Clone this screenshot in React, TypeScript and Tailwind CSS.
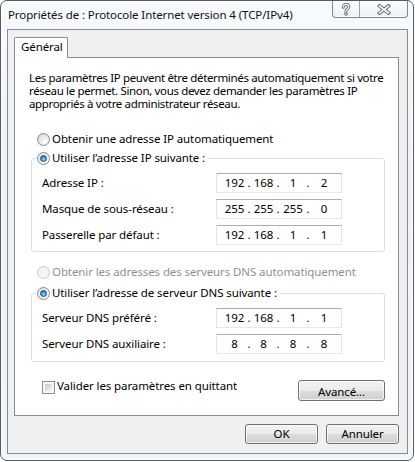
import React from "react";

function Radio({ checked = false, disabled = false }: { checked?: boolean; disabled?: boolean }) {
  return (
    <span
      className={`w-[13px] h-[13px] rounded-full border flex items-center justify-center shrink-0 ${
        disabled
          ? "border-[#c8c8c8] bg-[#f4f4f4]"
          : checked
          ? "border-[#8a8a8a] bg-[radial-gradient(circle_at_60%_65%,#ffffff_0%,#f0f0f0_55%,#d4d4d4_100%)]"
          : "border-[#8a8a8a] bg-[radial-gradient(circle_at_65%_70%,#ffffff_0%,#e9e9e9_45%,#cdcdcd_100%)]"
      }`}
    >
      {checked && (
        <span className="w-[7px] h-[7px] rounded-full border border-[#1a4f82] bg-[radial-gradient(circle_at_55%_65%,#9be2ff_0%,#3a96d8_50%,#17569a_100%)]" />
      )}
    </span>
  );
}

function Checkbox() {
  return (
    <span className="w-[13px] h-[13px] border border-[#8e8f8f] bg-[#f6f6f6] p-[2px] shrink-0 block">
      <span className="block w-full h-full bg-[linear-gradient(135deg,#c3c7cd_0%,#e2e4e7_60%,#f4f4f4_100%)]" />
    </span>
  );
}

function IpField({ parts }: { parts: string[] }) {
  const widths = ["w-[25px]", "w-[25px]", "w-[26px]", "w-[28px]"];
  return (
    <div className="w-[126px] h-[20px] border border-[#dfe3ea] border-t-[#abadb3] border-b-[#e3e9ef] bg-white flex items-center pl-[5px] shrink-0">
      {parts.map((p, i) => (
        <React.Fragment key={i}>
          <span className={`${widths[i]} text-center`}>{p}</span>
          {i < 3 && <span className="w-[4px] flex justify-center">.</span>}
        </React.Fragment>
      ))}
    </div>
  );
}

function FieldRow({ label, parts }: { label: string; parts: string[] }) {
  return (
    <div className="flex items-center h-[20px] pl-[6px]">
      <span className="w-[174px] shrink-0 whitespace-nowrap">{label}</span>
      <IpField parts={parts} />
    </div>
  );
}

function WinButton({ children, className = "" }: { children: React.ReactNode; className?: string }) {
  return (
    <div
      className={`flex items-center justify-center rounded-[3px] border border-[#707070] bg-[linear-gradient(180deg,#f2f2f2_0%,#ebebeb_50%,#dddddd_51%,#cfcfcf_100%)] shadow-[inset_0_0_0_1px_rgba(255,255,255,0.7)] ${className}`}
    >
      {children}
    </div>
  );
}

function HelpIcon() {
  return (
    <svg width="10" height="13" viewBox="0 0 10 13">
      <g fill="none" strokeLinecap="round" strokeLinejoin="round">
        <path d="M2.2 4.2 C2.2 2.2 3.6 1.4 5 1.4 C6.6 1.4 7.8 2.4 7.8 3.8 C7.8 5.2 6.6 5.8 5.6 6.6 C5 7.1 5 7.6 5 8.4" stroke="#5f6b78" strokeWidth="3" />
        <path d="M2.2 4.2 C2.2 2.2 3.6 1.4 5 1.4 C6.6 1.4 7.8 2.4 7.8 3.8 C7.8 5.2 6.6 5.8 5.6 6.6 C5 7.1 5 7.6 5 8.4" stroke="#ffffff" strokeWidth="1.2" />
        <circle cx="5" cy="11" r="1.4" fill="#ffffff" stroke="#5f6b78" strokeWidth="0.9" />
      </g>
    </svg>
  );
}

function CloseIcon() {
  return (
    <svg width="14" height="11" viewBox="0 0 14 11">
      <g fill="none" strokeLinecap="square">
        <path d="M2.5 2 L11.5 9 M11.5 2 L2.5 9" stroke="#5f6b78" strokeWidth="3.6" />
        <path d="M2.5 2 L11.5 9 M11.5 2 L2.5 9" stroke="#ffffff" strokeWidth="1.6" />
      </g>
    </svg>
  );
}

export default function App() {
  return (
    <div className="w-[415px] h-[462px] bg-white text-[11.5px] tracking-[-0.1px] leading-[16px] text-black [font-family:'Noto_Sans',sans-serif]">
      <div className="w-[414px] h-[461px] flex flex-col rounded-[7px] border border-[#555a60] bg-[linear-gradient(180deg,#f7fafd_0%,#edf3f9_35%,#f0f5fa_100%)] shadow-[inset_0_0_0_1px_rgba(255,255,255,0.85)]">
        {/* Title bar */}
        <div className="h-[28px] shrink-0 flex justify-between items-start">
          <div className="pl-[7px] pt-[6px] whitespace-nowrap text-[#101010]">
            Propriétés de : Protocole Internet version 4 (TCP/IPv4)
          </div>
          <div className="flex mr-[5px] h-[17px] border border-t-0 border-[#7d858e] rounded-b-[4px] overflow-hidden bg-[linear-gradient(180deg,rgba(255,255,255,0.85)_0%,rgba(232,238,245,0.8)_100%)] shadow-[inset_0_-1px_0_rgba(255,255,255,0.8)]">
            <div className="w-[27px] flex items-center justify-center border-r border-[#98a0a9]">
              <HelpIcon />
            </div>
            <div className="w-[47px] flex items-center justify-center">
              <CloseIcon />
            </div>
          </div>
        </div>

        {/* Client area */}
        <div className="flex-1 ml-[6px] mr-[5px] mb-[6px] border border-[#868b91] bg-[#f0f0f0] flex flex-col pl-[6px] pr-[8px] pt-[7px]">
          <div className="flex">
            <div className="relative z-10 -mb-px h-[21px] w-[54px] border border-b-0 border-[#898c95] rounded-t-[2px] bg-white pl-[6px] pt-[1px]">
              Général
            </div>
          </div>
          <div className="h-[359px] shrink-0 border border-[#898c95] bg-white flex flex-col pl-[14px] pr-[13px] pt-[13px]">
            <p className="leading-[13px] tracking-[-0.35px] whitespace-nowrap">
              Les paramètres IP peuvent être déterminés automatiquement si votre
              <br />
              réseau le permet. Sinon, vous devez demander les paramètres IP
              <br />
              appropriés à votre administrateur réseau.
            </p>

            <div className="mt-[21px] h-[16px] flex items-center gap-[2px] pl-[8px] whitespace-nowrap">
              <Radio />
              <span>Obtenir une adresse IP automatiquement</span>
            </div>

            <fieldset className="mt-[3px] ml-[2px] pl-[4px] border border-[#d5dfe5] rounded-[3px]">
              <legend className="px-[1px]">
                <span className="flex items-center gap-[2px] h-[16px] pr-[2px] whitespace-nowrap">
                  <Radio checked />
                  <span>Utiliser l’adresse IP suivante :</span>
                </span>
              </legend>
              <div className="flex flex-col gap-[6px] pt-[7px] pb-[6px]">
                <FieldRow label="Adresse IP :" parts={["192", "168", "1", "2"]} />
                <FieldRow label="Masque de sous-réseau :" parts={["255", "255", "255", "0"]} />
                <FieldRow label="Passerelle par défaut :" parts={["192", "168", "1", "1"]} />
              </div>
            </fieldset>

            <div className="mt-[12px] h-[16px] flex items-center gap-[2px] pl-[8px] whitespace-nowrap text-[#8f8f8f]">
              <Radio disabled />
              <span>Obtenir les adresses des serveurs DNS automatiquement</span>
            </div>

            <fieldset className="mt-[5px] ml-[2px] pl-[4px] border border-[#d5dfe5] rounded-[3px]">
              <legend className="px-[1px]">
                <span className="flex items-center gap-[2px] h-[16px] pr-[2px] whitespace-nowrap">
                  <Radio checked />
                  <span>Utiliser l’adresse de serveur DNS suivante :</span>
                </span>
              </legend>
              <div className="flex flex-col gap-[6px] pt-[7px] pb-[7px]">
                <FieldRow label="Serveur DNS préféré :" parts={["192", "168", "1", "1"]} />
                <FieldRow label="Serveur DNS auxiliaire :" parts={["8", "8", "8", "8"]} />
              </div>
            </fieldset>

            <div className="mt-[16px] flex justify-between items-start">
              <div className="flex items-start gap-[2px] pl-[13px] whitespace-nowrap">
                <span className="mt-[3px]">
                  <Checkbox />
                </span>
                <span>Valider les paramètres en quittant</span>
              </div>
              <WinButton className="mt-[2px] w-[87px] h-[21px] pt-[2px]">Avancé...</WinButton>
            </div>
          </div>

          <div className="mt-[8px] flex justify-end gap-[8px]">
            <WinButton className="w-[73px] h-[20px]">OK</WinButton>
            <WinButton className="w-[73px] h-[20px]">Annuler</WinButton>
          </div>
        </div>
      </div>
    </div>
  );
}
